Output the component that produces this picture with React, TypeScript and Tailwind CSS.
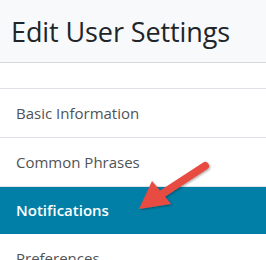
import React from 'react';

const items = ['Basic Information', 'Common Phrases', 'Notifications', 'Preferences'];

export default function App() {
  return (
    <div className="relative w-[266px] h-[260px] overflow-hidden bg-white font-['Open_Sans',sans-serif]">
      <div className="h-[63px] bg-[#f8f9fa] border-b border-[#d6d8db] flex items-center pl-[11px]">
        <h1 className="text-[27px] leading-none text-[#212529] tracking-[-0.1px]">Edit User Settings</h1>
      </div>
      <div className="h-[26px] border-b border-[#dee2e6]" />
      <ul>
        {items.map(item => {
          const active = item === 'Notifications';
          return (
            <li
              key={item}
              className={
                active
                  ? 'h-[47px] flex items-center pl-[16px] bg-[#017fa6] text-white text-[15px] font-semibold'
                  : 'h-[49px] flex items-center pl-[16px] border-b border-[#dee2e6] text-[#4f5357] text-[15px]'
              }>
              {item}
            </li>
          );
        })}
      </ul>
      <svg className="absolute left-0 top-0" width="266" height="260" viewBox="0 0 266 260">
        <defs>
          <filter id="sh" x="-20%" y="-20%" width="140%" height="140%">
            <feDropShadow dx="1" dy="1" stdDeviation="1" floodColor="#000" floodOpacity="0.35" />
          </filter>
        </defs>
        <g filter="url(#sh)">
          <line x1="205" y1="166" x2="162" y2="194" stroke="#e74c42" strokeWidth="8" strokeLinecap="round" />
          <polygon points="139,209 152,181 171,204" fill="#e74c42" />
        </g>
      </svg>
    </div>
  );
}
